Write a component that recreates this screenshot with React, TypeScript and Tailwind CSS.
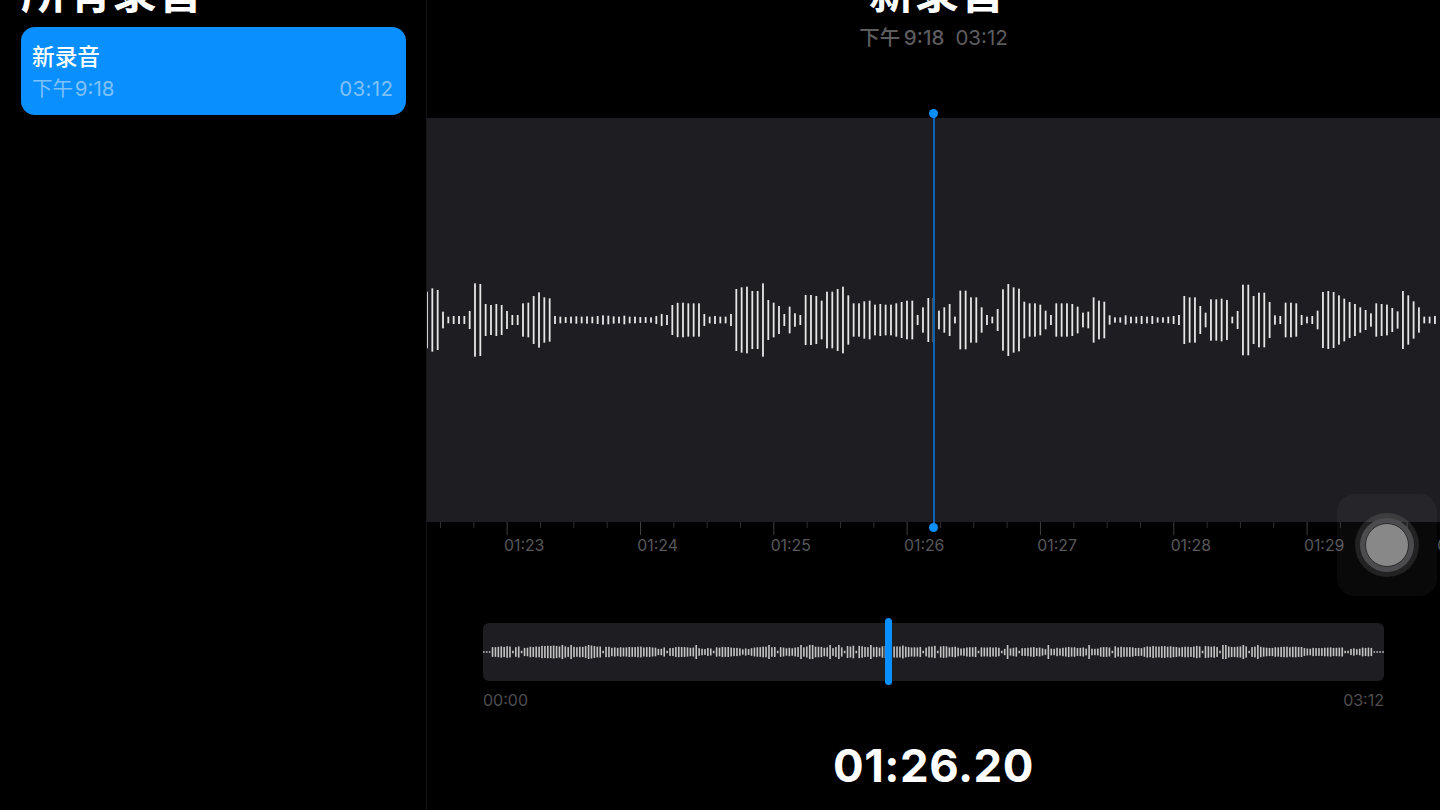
const CJK = 'font-["Inter","Noto_Sans_CJK_SC",sans-serif]';

// bar heights read off the recording, in 1/3 px
const WAVE = [
  170, 190, 180, 50, 20, 24, 24, 24, 54, 220, 216, 96, 90, 96, 90, 54, 30, 30, 100, 104, 144, 166, 136, 130,
  24, 20, 18, 20, 22, 20, 22, 20, 24, 28, 26, 22, 20, 26, 20, 20, 18, 18, 16, 24,
  36, 30, 90, 103, 104, 100, 100, 100, 36, 20, 24, 20, 20, 36, 186, 196, 200, 174, 174, 220,
  120, 104, 84, 36, 80, 40, 30, 150, 150, 144, 116, 170, 170, 186, 200, 148, 100, 100, 112, 116, 92, 96, 92, 92,
  100, 108, 116, 116, 30, 76, 132, 132, 56, 76, 96, 20, 176, 176, 136, 136, 76, 30, 20, 66, 184, 216, 196, 188,
  110, 100, 100, 92, 56, 30, 100, 100, 100, 96, 80, 44, 50, 136, 116, 110,
  28, 16, 16, 28, 20, 20, 24, 20, 24, 16, 16, 20, 24, 30, 144, 136, 136, 84, 44, 124, 124, 128, 120, 20, 54,
  212, 212, 144, 164, 164, 108, 28, 24, 104, 104, 100, 30, 20, 24, 56, 168, 174, 168, 148, 128, 108, 96, 76, 60,
  40, 100, 96, 92, 72, 52, 174, 148, 112, 76, 20, 20, 24,
];

// overview bars: cheap repeatable noise instead of reading 300 values
const OVERVIEW = Array.from({ length: 310 }, (_, i) => {
  if (i < 3 || i > 305) return 1.5;
  const n = Math.abs(Math.sin(i * 12.9898) * 43758.5453) % 1;
  const swell = 6 + 3 * Math.abs(Math.sin(i * 0.21)) + 1.5 * Math.sin(i * 0.057);
  if (n > 0.94) return 14;
  if (n < 0.07) return 2.5;
  return swell + n * 3;
});

const TICKS = Array.from({ length: 31 }, (_, i) => i);
const LABELS = ['01:23', '01:24', '01:25', '01:26', '01:27', '01:28', '01:29', '01:30'];

function Waveform() {
  return (
    <svg width="1013" height="404" className="block">
      {WAVE.map((h, i) => (
        <rect key={i} x={i * 5.333 - 0.9} y={202 - h / 6} width="1.8" height={h / 3} fill="#e6e6e6" />
      ))}
    </svg>
  );
}

function Ruler() {
  return (
    <svg width="1013" height="14" className="block">
      {TICKS.map((i) => (
        <rect
          key={i}
          x={13 + i * 33.33}
          y="0"
          width="1"
          height={i % 4 === 2 ? 13 : 6}
          fill={i % 4 === 2 ? '#3f3f41' : '#303032'}
        />
      ))}
    </svg>
  );
}

function Overview() {
  return (
    <svg width="901" height="58" className="block">
      {OVERVIEW.map((h, i) => (
        <rect key={i} x={i * 2.91} y={29 - h / 2} width="1.6" height={h} fill="#c4c4c4" />
      ))}
    </svg>
  );
}

export default function App() {
  return (
    <div className={`relative flex w-[1440px] h-[810px] overflow-hidden bg-black text-white ${CJK}`}>
      <aside className="w-[427px] shrink-0 border-r border-[#141416] px-[21px]">
        <h1 className="-mt-[37px] h-[64px] text-[45.5px] leading-[60px] font-bold whitespace-nowrap">所有录音</h1>
        <div className="w-[385px] h-[88px] rounded-[14px] bg-[#0a8fff] px-[11px] pt-[15px]">
          <p className="text-[22.7px] leading-[30px] font-medium">新录音</p>
          <div className="flex justify-between mt-[3px] text-[20.5px] leading-[28px] text-[#7fc1fb]">
            <span>下午&#8202;9:18</span>
            <span className="mr-[1.5px] tracking-[0.4px]">03:12</span>
          </div>
        </div>
      </aside>

      <main className="relative flex-1 min-w-0">
        <header className="flow-root h-[118px] text-center">
          <h2 className="-mt-[37px] h-[64px] pl-[7px] text-[45.5px] leading-[60px] font-bold">新录音</h2>
          <p className="-mt-[3px] text-[20.5px] leading-[28px] text-[#5d5d5f]">
            <span className="font-medium">下午&thinsp;9:18</span>
            <span className="ml-[11px]">03:12</span>
          </p>
        </header>

        <div className="h-[404px] bg-[#1e1e22]">
          <Waveform />
        </div>
        <Ruler />
        <div className="flex pl-[77px] mt-[1px] h-[18px] overflow-hidden text-[15.8px] leading-[18px] text-[#58585a] whitespace-nowrap">
          {LABELS.map((t) => (
            <span key={t} className="w-[133.33px] shrink-0">{t}</span>
          ))}
        </div>

        <div className="relative mx-[56px] mt-[68px] w-[901px] h-[58px] rounded-[6px] bg-[#1e1e22]">
          <Overview />
          <div className="absolute left-[402px] -top-[5px] w-[7px] h-[67px] rounded-full bg-[#0a8fff]" />
        </div>
        <div className="flex justify-between mx-[56px] w-[901px] mt-[9px] text-[16px] leading-[20px] text-[#4e4e50]">
          <span>00:00</span>
          <span>03:12</span>
        </div>
        <p className="mt-[28px] text-center text-[45.5px] leading-[56px] font-bold tracking-[0.5px]">01:26.20</p>

        {/* playhead */}
        <div className="absolute left-[506px] top-[113px] h-[414px] w-[2px] bg-[#0b62b5]" />
        <div className="absolute left-[502px] top-[108.5px] w-[9px] h-[9px] rounded-full bg-[#0a8fff]" />
        <div className="absolute left-[502px] top-[522.5px] w-[9px] h-[9px] rounded-full bg-[#0a8fff]" />
      </main>

      {/* assistive touch */}
      <div className="absolute left-[1337px] top-[494px] flex items-center justify-center w-[100px] h-[102px] rounded-[18px] bg-white/[0.035]">
        <div className="flex items-center justify-center w-[64px] h-[64px] rounded-full bg-white/10">
          <div className="flex items-center justify-center w-[54px] h-[54px] rounded-full bg-[#4c4c4e]">
            <div className="w-[44px] h-[44px] rounded-full border border-[#2c2c2c] bg-[#888888]" />
          </div>
        </div>
      </div>
    </div>
  );
}
